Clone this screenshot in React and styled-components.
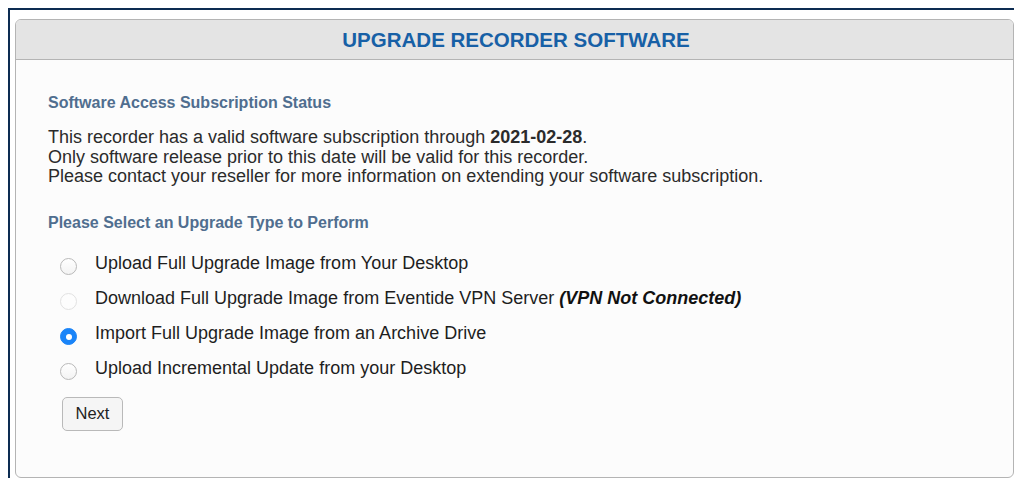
import React, { useState } from 'react';
import styled, { createGlobalStyle } from 'styled-components';

const GlobalStyle = createGlobalStyle`
  html, body {
    height: 100%;
    background: #ffffff;
    overflow: hidden;
  }
  body {
    margin: 0;
    padding: 8px 0 0 8px;
    box-sizing: border-box;
    font-family: "Liberation Sans", Arial, Helvetica, sans-serif;
    color: #2b2b2b;
  }
`;

// --- Layout ---

const Frame = styled.div`
  box-sizing: border-box;
  height: 100%;
  border-top: 2px solid #0d2c52;
  border-left: 2px solid #0d2c52;
  padding: 9px 0 0 5px;
`;

const Panel = styled.section`
  border: 1px solid #b4b4b4;
  border-radius: 6px;
  background: #fcfcfc;
  overflow: hidden;
`;

const PanelHeader = styled.header`
  height: 39px;
  display: flex;
  align-items: center;
  justify-content: center;
  background: #e4e4e4;
  border-bottom: 1px solid #b4b4b4;
`;

const PanelTitle = styled.h1`
  margin: 0 0 0 3px;
  font-size: 20.5px;
  font-weight: bold;
  color: #1760a6;
`;

const PanelBody = styled.div`
  padding: 34px 32px 46px;
`;

const SectionTitle = styled.h2`
  margin: ${({ $top }) => $top || 0}px 0 0;
  font-size: 16px;
  line-height: 18px;
  font-weight: bold;
  color: #506e8f;
`;

const Paragraph = styled.p`
  margin: 16px 0 0;
  font-size: 18px;
  line-height: 19.5px;
  color: #2b2b2b;
`;

const OptionList = styled.div`
  margin-top: 14px;
  display: flex;
  flex-direction: column;
`;

const OptionRow = styled.label`
  display: flex;
  align-items: center;
  height: 35px;
  padding-left: 12px;
  font-size: 18px;
  color: #1e1e1e;
  cursor: ${({ $disabled }) => ($disabled ? 'default' : 'pointer')};
`;

const Radio = styled.input.attrs({ type: 'radio' })`
  appearance: none;
  margin: 7px 18px 0 0;
  width: 17px;
  height: 17px;
  border-radius: 50%;
  flex-shrink: 0;
  border: 1px solid #b9b9b9;
  background: linear-gradient(#ffffff, #f3f3f3);
  position: relative;

  &:disabled {
    border-color: #e2e2e2;
    background: #fdfdfd;
  }

  &:checked {
    border-color: #1a84f8;
    background: #1a84f8;
  }

  &:checked::after {
    content: '';
    position: absolute;
    top: 50%;
    left: 50%;
    width: 6px;
    height: 6px;
    margin: -3px 0 0 -3px;
    border-radius: 50%;
    background: #ffffff;
  }
`;

const Note = styled.em`
  font-weight: bold;
  color: #111;
`;

const NextButton = styled.button`
  margin: 11px 0 0 14px;
  width: 61px;
  height: 34px;
  border: 1px solid #b9b9b9;
  border-radius: 5px;
  background: #f5f5f5;
  font-family: inherit;
  font-size: 16.5px;
  color: #222;
  cursor: pointer;
`;

const options = [
  { id: 'desktop', label: 'Upload Full Upgrade Image from Your Desktop' },
  {
    id: 'vpn',
    label: 'Download Full Upgrade Image from Eventide VPN Server',
    note: '(VPN Not Connected)',
    disabled: true,
  },
  { id: 'archive', label: 'Import Full Upgrade Image from an Archive Drive' },
  { id: 'incremental', label: 'Upload Incremental Update from your Desktop' },
];

export default function App() {
  const [choice, setChoice] = useState('archive');

  return (
    <>
      <GlobalStyle />
      <Frame>
        <Panel>
          <PanelHeader>
            <PanelTitle>UPGRADE RECORDER SOFTWARE</PanelTitle>
          </PanelHeader>
          <PanelBody>
            <SectionTitle>Software Access Subscription Status</SectionTitle>
            <Paragraph>
              This recorder has a valid software subscription through <b>2021-02-28</b>.
              <br />
              Only software release prior to this date will be valid for this recorder.
              <br />
              Please contact your reseller for more information on extending your software subscription.
            </Paragraph>

            <SectionTitle $top={27}>Please Select an Upgrade Type to Perform</SectionTitle>
            <OptionList>
              {options.map((opt) => (
                <OptionRow key={opt.id} $disabled={opt.disabled}>
                  <Radio
                    name="upgradeType"
                    value={opt.id}
                    disabled={opt.disabled}
                    checked={choice === opt.id}
                    onChange={() => setChoice(opt.id)}
                  />
                  <span>
                    {opt.label}
                    {opt.note && (
                      <>
                        {' '}
                        <Note>{opt.note}</Note>
                      </>
                    )}
                  </span>
                </OptionRow>
              ))}
            </OptionList>
            <NextButton type="button">Next</NextButton>
          </PanelBody>
        </Panel>
      </Frame>
    </>
  );
}
